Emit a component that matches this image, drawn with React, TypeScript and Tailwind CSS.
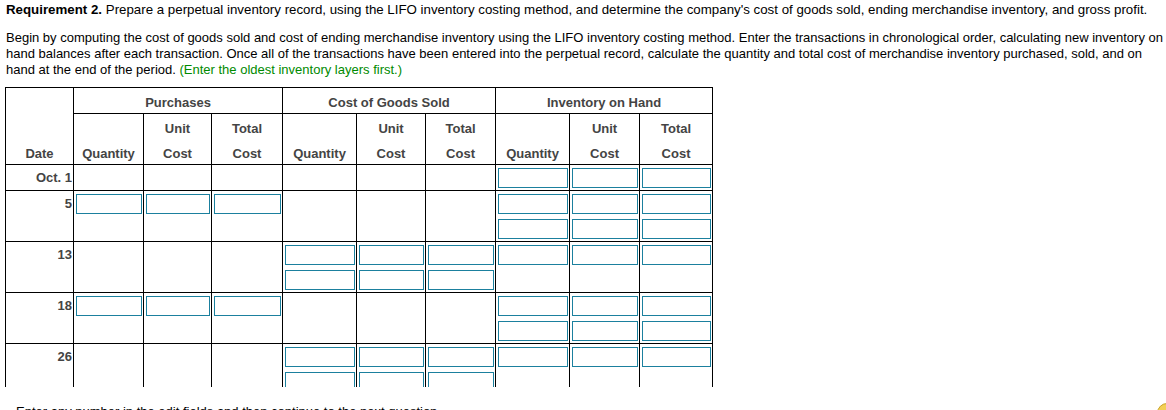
import React from 'react';

type Slots = { p: number; c: number; i: number };

const rows: { date: string; slots: Slots; lines: number }[] = [
  { date: 'Oct. 1', slots: { p: 0, c: 0, i: 1 }, lines: 1 },
  { date: '5', slots: { p: 1, c: 0, i: 2 }, lines: 2 },
  { date: '13', slots: { p: 0, c: 2, i: 1 }, lines: 2 },
  { date: '18', slots: { p: 1, c: 0, i: 2 }, lines: 2 },
  { date: '26', slots: { p: 0, c: 2, i: 1 }, lines: 2 },
];

const widths = [68, 70, 68, 71, 74, 69, 70, 74, 70, 73];

const Field: React.FC = () => (
  <div className="h-[25px] pt-[3px] pl-[2px] pr-[1px]">
    <input
      type="text"
      className="block w-full h-[20px] border border-[#1b809e] bg-white outline-none"
    />
  </div>
);

const InputCell: React.FC<{ count: number }> = ({ count }) => (
  <td className="border border-black p-0 align-top">
    {Array.from({ length: count }).map((_, k) => (
      <Field key={k} />
    ))}
  </td>
);

const Head: React.FC<{ children: React.ReactNode }> = ({ children }) => (
  <span className="block translate-y-[2px]">{children}</span>
);

export default function App() {
  const th = 'border border-black p-0 font-bold text-[#444] text-center leading-[25px]';
  return (
    <div
      className="w-[1166px] h-[410px] overflow-hidden bg-white text-black text-[13px] leading-[16px]"
      style={{ fontFamily: '"Liberation Sans", Arial, sans-serif' }}
    >
      <div className="pl-[6px] pt-[2px]">
        <p className="whitespace-nowrap text-[13.3px]">
          <span className="font-bold">Requirement 2.</span> Prepare a perpetual inventory record, using the LIFO
          inventory costing method, and determine the company's cost of goods sold, ending merchandise inventory,
          and gross profit.
        </p>
        <p className="mt-[12px]">
          <span className="whitespace-nowrap">
            Begin by computing the cost of goods sold and cost of ending merchandise inventory using the LIFO
            inventory costing method. Enter the transactions in chronological order, calculating new inventory on
          </span>
          <br />
          <span className="whitespace-nowrap">
            hand balances after each transaction. Once all of the transactions have been entered into the perpetual
            record, calculate the quantity and total cost of merchandise inventory purchased, sold, and on
          </span>
          <br />
          <span className="whitespace-nowrap">
            hand at the end of the period.{' '}
            <span className="text-[#008a00]">(Enter the oldest inventory layers first.)</span>
          </span>
        </p>
      </div>

      {/* Ledger */}
      <div className="mt-[9px] pl-[5px] h-[300px] overflow-hidden">
        <table className="table-fixed border-collapse w-[708px]">
          <colgroup>
            {widths.map((w, k) => (
              <col key={k} style={{ width: w }} />
            ))}
          </colgroup>
          <thead>
            <tr className="h-[25px]">
              <th rowSpan={2} className={th + ' align-bottom'}>
                <Head>Date</Head>
              </th>
              <th colSpan={3} className={th}>
                <Head>Purchases</Head>
              </th>
              <th colSpan={3} className={th}>
                <Head>Cost of Goods Sold</Head>
              </th>
              <th colSpan={3} className={th}>
                <Head>Inventory on Hand</Head>
              </th>
            </tr>
            <tr className="h-[51px]">
              {[0, 1, 2].map((g) => (
                <React.Fragment key={g}>
                  <th className={th + ' align-bottom'}>
                    <Head>Quantity</Head>
                  </th>
                  <th className={th + ' align-bottom'}>
                    <Head>
                      Unit
                      <br />
                      Cost
                    </Head>
                  </th>
                  <th className={th + ' align-bottom'}>
                    <Head>
                      Total
                      <br />
                      Cost
                    </Head>
                  </th>
                </React.Fragment>
              ))}
            </tr>
          </thead>
          <tbody>
            {rows.map((r) => (
              <tr key={r.date} className={r.lines === 1 ? 'h-[26px]' : 'h-[51px]'}>
                <td className="border border-black p-0 pr-[1px] align-top text-right font-bold text-[#444] leading-[25px]">
                  {r.date}
                </td>
                <InputCell count={r.slots.p} />
                <InputCell count={r.slots.p} />
                <InputCell count={r.slots.p} />
                <InputCell count={r.slots.c} />
                <InputCell count={r.slots.c} />
                <InputCell count={r.slots.c} />
                <InputCell count={r.slots.i} />
                <InputCell count={r.slots.i} />
                <InputCell count={r.slots.i} />
              </tr>
            ))}
          </tbody>
        </table>
      </div>

      <div className="mt-[17px] flex items-start justify-between">
        <div className="flex items-center gap-[9px] whitespace-nowrap">
          <span className="block w-[7px] h-[7px] mt-[4px] bg-[#555]" />
          <span>Enter any number in the edit fields and then continue to the next question.</span>
        </div>
        <span className="block w-[20px] h-[20px] mr-[-11px] mt-[-1px] rounded-full bg-[#f3cf55] border border-[#c9a42c]" />
      </div>
    </div>
  );
}
